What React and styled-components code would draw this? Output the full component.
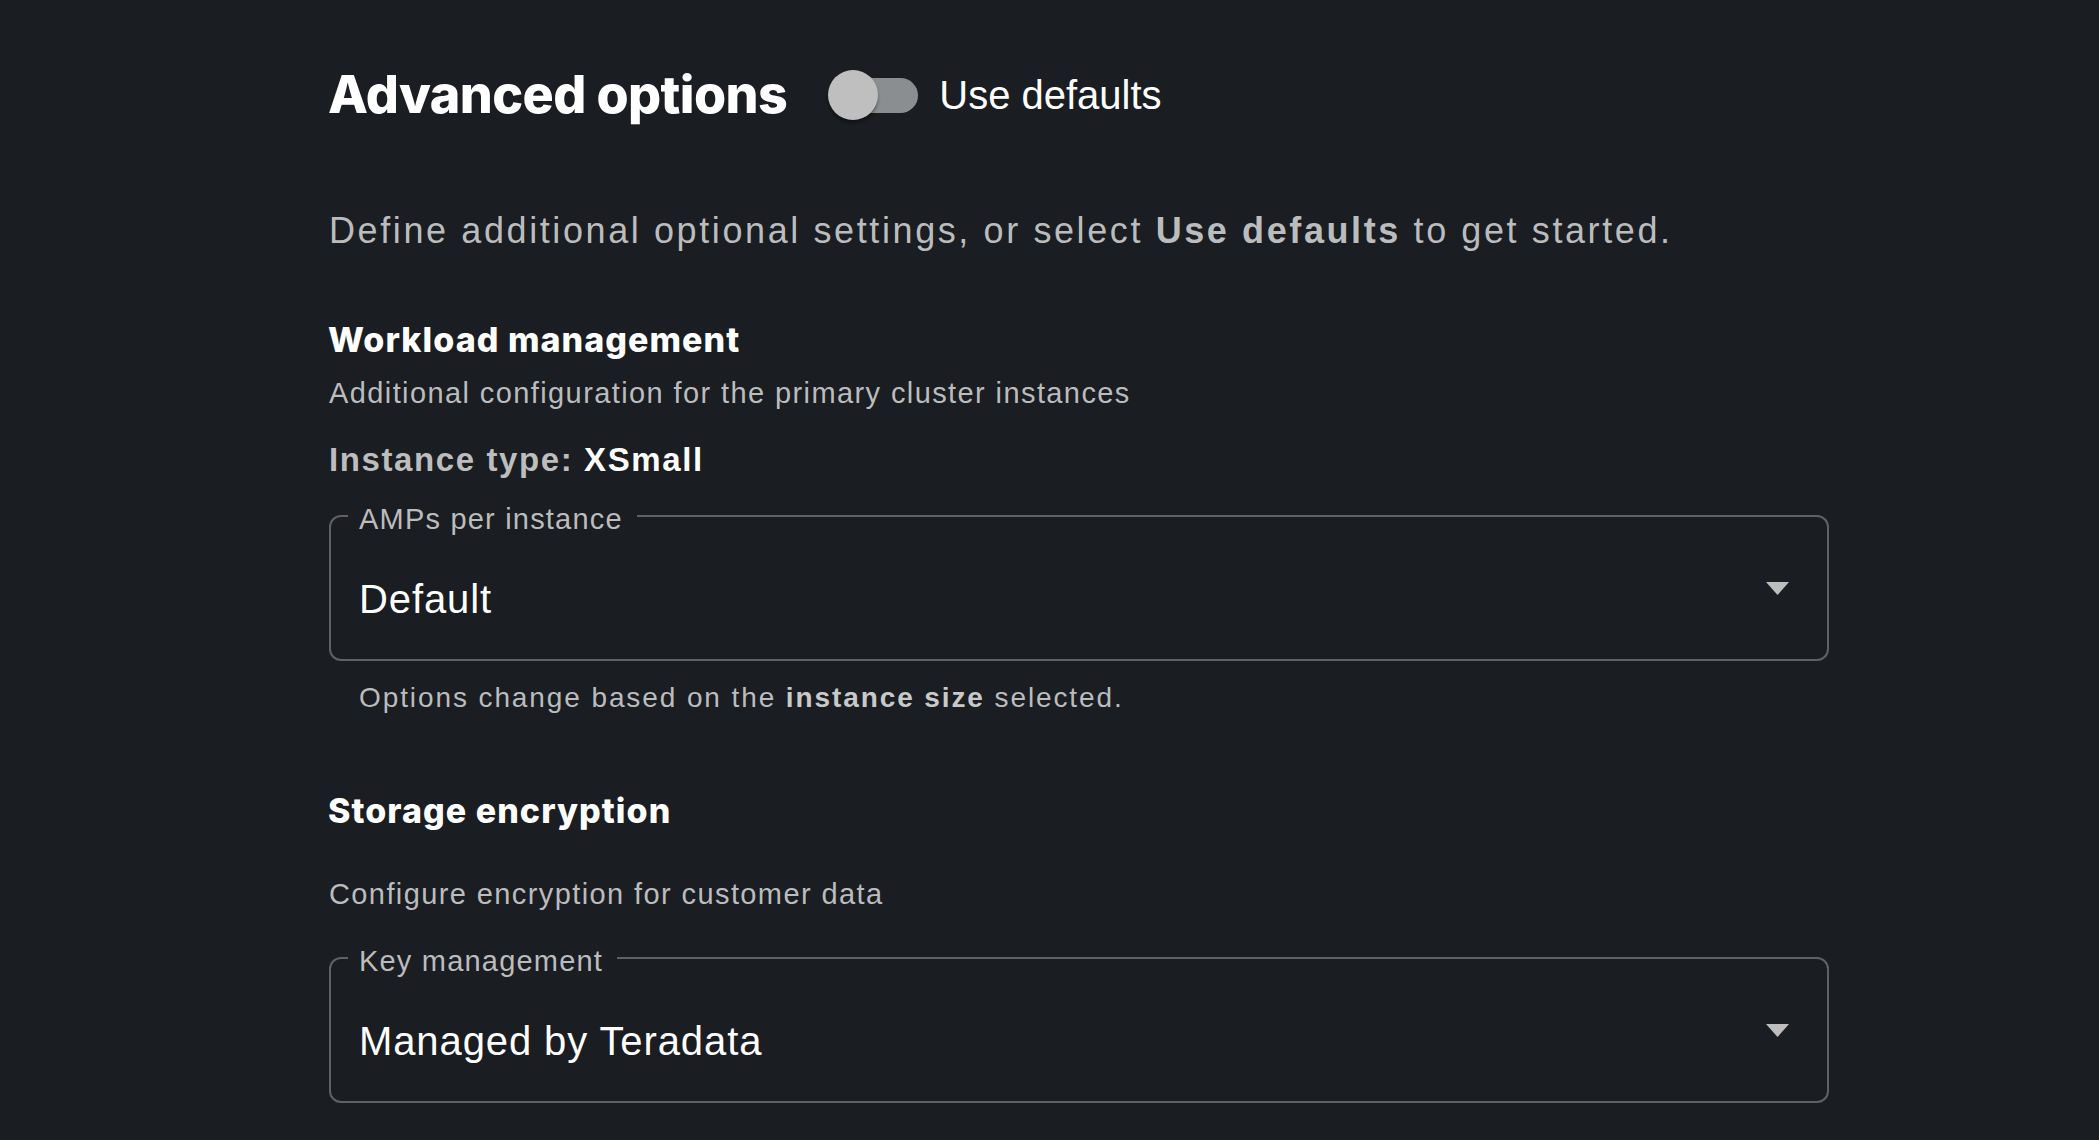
import React from "react";
import styled, { createGlobalStyle } from "styled-components";

const GlobalStyle = createGlobalStyle`
  body {
    margin: 0;
    background: #1a1d21;
    font-family: "Liberation Sans", Arial, sans-serif;
  }
`;

const Page = styled.main`
  min-height: 100vh;
  box-sizing: border-box;
  padding: 69px 0 0 329px;
  background: #1a1d21;
`;

const Content = styled.div`
  width: 1500px;
  display: flex;
  flex-direction: column;
`;

const Header = styled.div`
  display: flex;
  align-items: center;
  height: 52px;
`;

const Title = styled.h1`
  margin: 0 41px 0 -1px;
  font-family: Inter, sans-serif;
  font-weight: 800;
  font-size: 52px;
  line-height: 1;
  letter-spacing: -0.6px;
  color: #fff;
`;

const SwitchRoot = styled.label`
  position: relative;
  display: flex;
  align-items: center;
  width: 90px;
  height: 50px;
  margin-right: 21px;
  cursor: pointer;

  &::before {
    content: "";
    position: absolute;
    left: 5px;
    top: 8px;
    width: 85px;
    height: 35px;
    border-radius: 18px;
    background: #8b8e90;
  }
`;

const Knob = styled.span`
  position: relative;
  width: 50px;
  height: 50px;
  border-radius: 50%;
  background: #bfbfbf;
  box-shadow: 0 3px 3px rgba(0, 0, 0, 0.35);
`;

const SwitchText = styled.span`
  font-size: 40px;
  line-height: 1;
  color: #fff;
`;

const Lead = styled.p`
  margin: 92px 0 0 0;
  font-size: 36px;
  line-height: 1;
  letter-spacing: 2.6px;
  color: #bbbcbd;

  b {
    font-weight: 700;
  }
`;

const SectionTitle = styled.h2`
  margin: ${(p) => p.$top}px 0 0 -1px;
  font-family: Inter, sans-serif;
  font-weight: 800;
  font-size: 34px;
  line-height: 1;
  letter-spacing: 1.05px;
  color: #fff;
`;

const SubText = styled.p`
  margin: ${(p) => p.$top}px 0 0 0;
  font-size: 29px;
  line-height: 1;
  letter-spacing: 1.4px;
  color: #bbbcbd;
`;

const InstanceType = styled.p`
  margin: 35px 0 0 0;
  font-size: 33px;
  font-weight: 700;
  line-height: 1;
  letter-spacing: 1.6px;
  color: #bdbdbd;

  span {
    color: #fff;
  }
`;

const Field = styled.fieldset`
  margin: ${(p) => p.$top}px 0 0 0;
  padding: 0 38px 0 17px;
  min-width: 0;
  border: 2px solid #5e6266;
  border-radius: 12px;
`;

const Legend = styled.legend`
  padding: 7px 14px 0 11px;
  font-size: 29px;
  line-height: 1;
  letter-spacing: 1.2px;
  color: #bbbcbd;
`;

const SelectRow = styled.div`
  display: flex;
  align-items: flex-start;
  justify-content: space-between;
  height: 40px;
  margin: 45px 0 40px 0;
  padding-left: 11px;
`;

const SelectValue = styled.span`
  font-size: 40px;
  line-height: 1;
  letter-spacing: 0.9px;
  color: #fff;
`;

const Caret = styled.svg`
  margin-top: 3px;
  flex: none;
`;

const Helper = styled.p`
  margin: 23px 0 0 30px;
  font-size: 28px;
  line-height: 1;
  letter-spacing: 1.9px;
  color: #bbbcbd;

  b {
    color: #c9c9c9;
  }
`;

const Select = ({ label, value, top }) => (
  <Field $top={top}>
    <Legend>{label}</Legend>
    <SelectRow>
      <SelectValue>{value}</SelectValue>
      <Caret width="23" height="13" viewBox="0 0 23 13">
        <polygon points="0,0 23,0 11.5,13" fill="#bdbdbd" />
      </Caret>
    </SelectRow>
  </Field>
);

export default function App() {
  return (
    <Page>
      <GlobalStyle />
      <Content>
        <Header>
          <Title>Advanced options</Title>
          <SwitchRoot>
            <Knob />
          </SwitchRoot>
          <SwitchText>Use defaults</SwitchText>
        </Header>

        <Lead>
          Define additional optional settings, or select <b>Use defaults</b> to get started.
        </Lead>

        <SectionTitle $top={74}>Workload management</SectionTitle>
        <SubText $top={22}>Additional configuration for the primary cluster instances</SubText>
        <InstanceType>
          Instance type: <span>XSmall</span>
        </InstanceType>
        <Select top={22} label="AMPs per instance" value="Default" />
        <Helper>
          Options change based on the <b>instance size</b> selected.
        </Helper>

        <SectionTitle $top={82}>Storage encryption</SectionTitle>
        <SubText $top={52}>Configure encryption for customer data</SubText>
        <Select top={31} label="Key management" value="Managed by Teradata" />
      </Content>
    </Page>
  );
}
